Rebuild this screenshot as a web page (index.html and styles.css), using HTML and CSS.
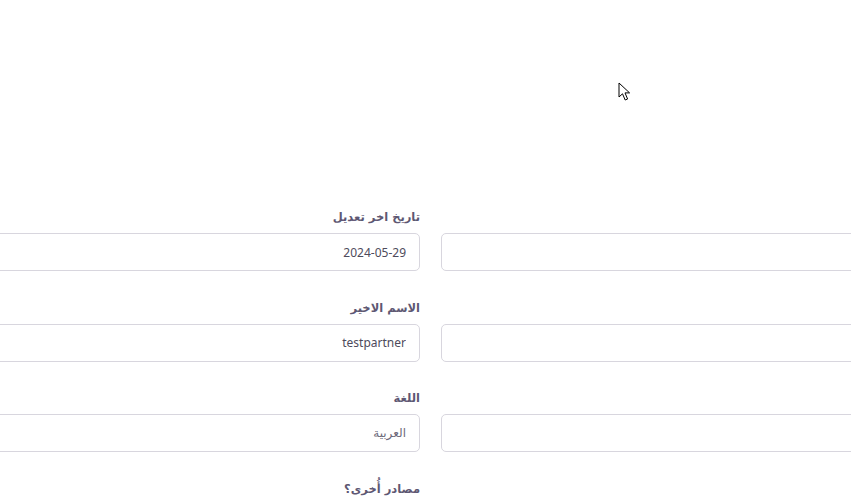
FILE: index.html
```html
<!DOCTYPE html>
<html lang="ar" dir="rtl">
<head>
    <meta charset="utf-8">
    <link rel="stylesheet" href="styles.css">
</head>
<body>
    <div class="page">
        <form class="profile-form">
            <div class="form-group">
                <label class="form-label">تاريخ الإنشاء</label>
                <input class="form-control" type="text" value="">
            </div>
            <div class="form-group">
                <label class="form-label">تاريخ اخر تعديل</label>
                <input class="form-control" type="text" value="2024-05-29" readonly>
            </div>
            <div class="form-group">
                <label class="form-label">الاسم الاول</label>
                <input class="form-control" type="text" value="">
            </div>
            <div class="form-group">
                <label class="form-label">الاسم الاخير</label>
                <input class="form-control" type="text" value="testpartner">
            </div>
            <div class="form-group">
                <label class="form-label">البريد الالكتروني</label>
                <input class="form-control" type="text" value="">
            </div>
            <div class="form-group">
                <label class="form-label">اللغة</label>
                <div class="form-control select">العربية</div>
            </div>
            <div class="form-group">
                <label class="form-label">كيف سمعت عنا؟</label>
            </div>
            <div class="form-group">
                <label class="form-label">مصادر أُخرى؟</label>
            </div>
        </form>
    </div>

    <svg class="cursor" width="13" height="20" viewBox="0 0 13 20">
        <path d="M1 1 L1 15 L4.5 11.8 L7.2 18 L9.6 17 L7 10.9 L11.6 10.9 Z" fill="#fff" stroke="#000" stroke-width="1" stroke-linejoin="round"/>
    </svg>
</body>
</html>
```

FILE: styles.css
```css
html, body {
    width: 100%;
    height: 100%;
    margin: 0;
    padding: 0;
    overflow: hidden;
    background: #fff;
    font-family: "DejaVu Sans", "Noto Sans", sans-serif;
}

* {
    box-sizing: border-box;
}

.page {
    padding-top: 207px;
    margin-right: -190px;
    width: 1111px;
}

.profile-form {
    display: grid;
    grid-template-columns: 600px 490px;
    column-gap: 21px;
}

.form-group {
    display: flex;
    flex-direction: column;
    margin-bottom: 26.7px;
}

.form-label {
    height: 20px;
    font-size: 11.5px;
    font-weight: bold;
    line-height: 20px;
    color: #5e5873;
    margin-bottom: 6px;
}

.form-control {
    height: 38px;
    width: 100%;
    border: 1px solid #d8d6de;
    border-radius: 5px;
    padding: 0 13px;
    font-family: "Noto Sans", "DejaVu Sans", sans-serif;
    font-size: 12px;
    color: #4e4b5c;
    background: #fff;
    direction: rtl;
    text-align: right;
    outline: 0;
}

.form-control.select {
    display: flex;
    align-items: center;
    font-family: "DejaVu Sans", sans-serif;
    color: #6e6b7b;
}

.cursor {
    position: absolute;
    left: 618px;
    top: 82px;
}
```
